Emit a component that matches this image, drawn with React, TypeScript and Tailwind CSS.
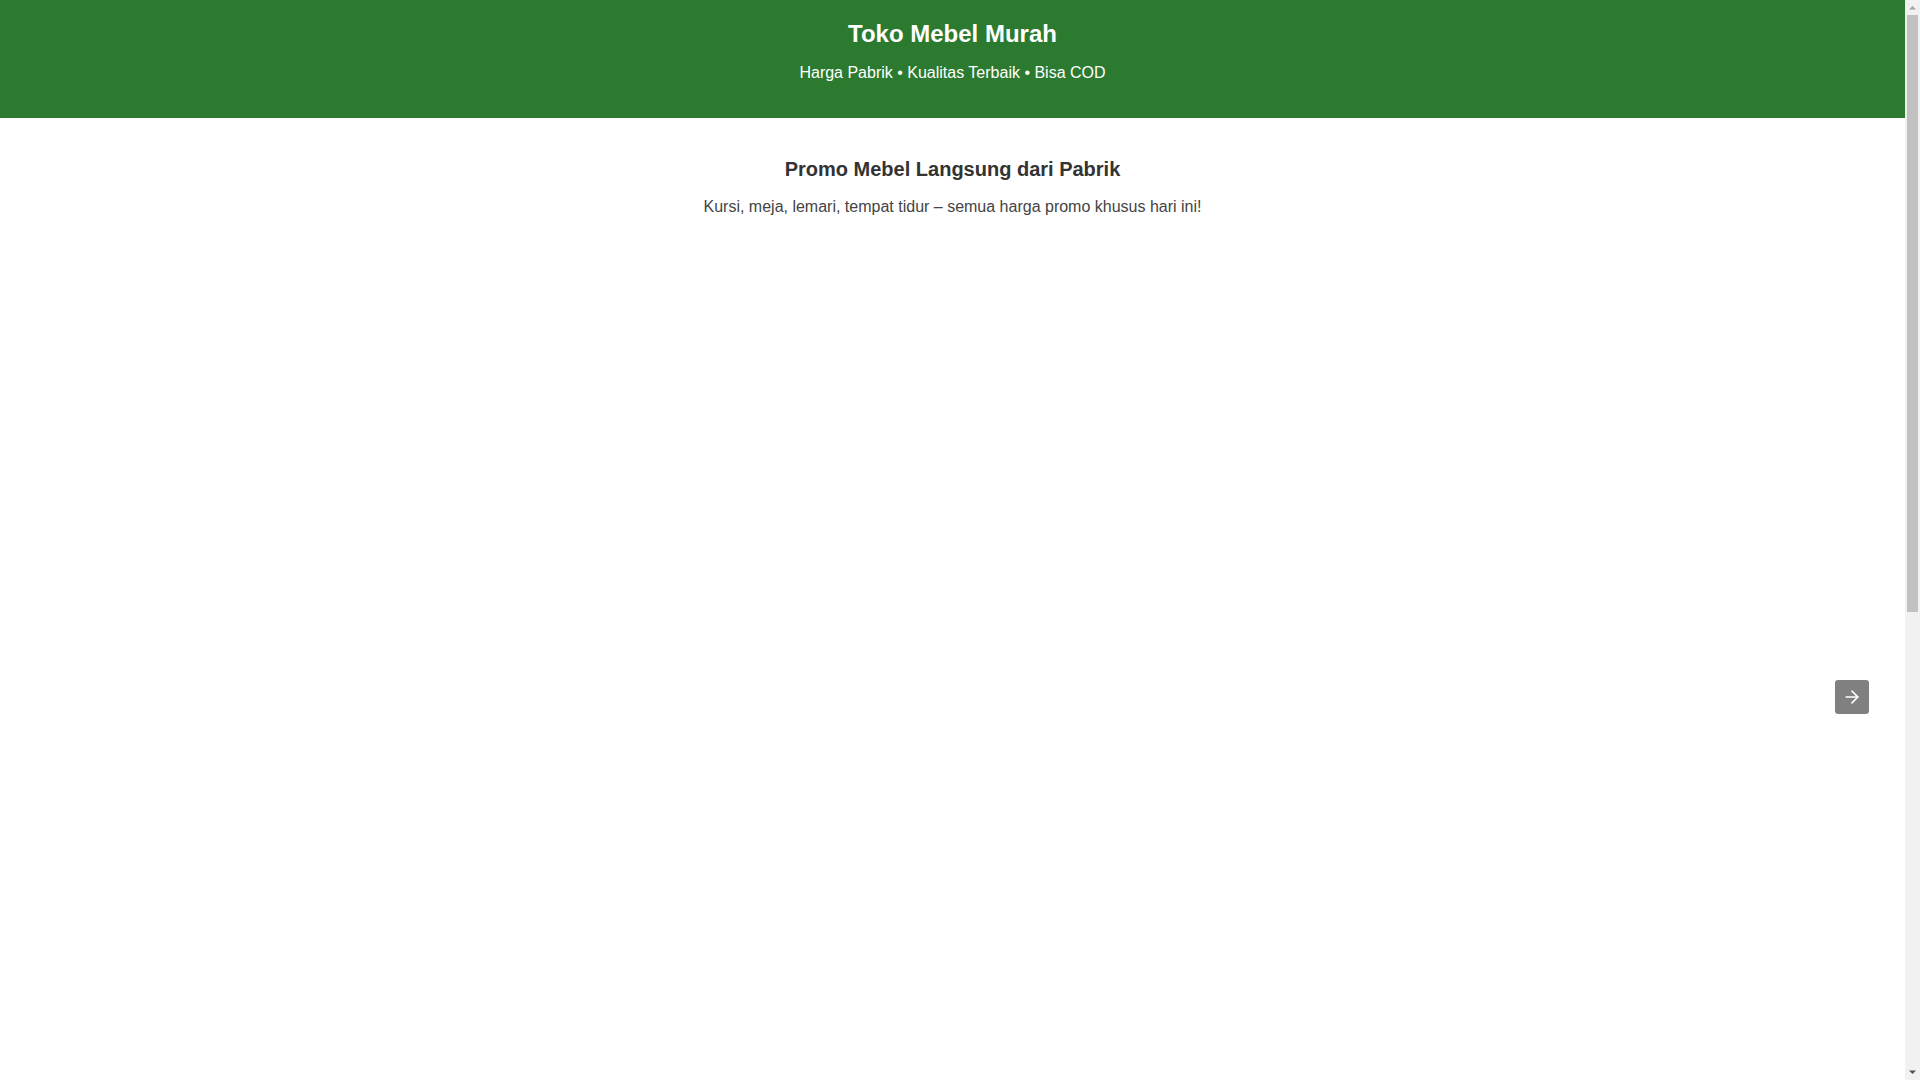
import React from 'react';
import { ArrowRight } from 'lucide-react';

const PromoSlider: React.FC = () => (
  <div className="relative h-[926px] w-full">
    <button
      type="button"
      aria-label="Next"
      className="absolute right-9 top-[461px] flex h-[34px] w-[34px] items-center justify-center rounded-[3px] bg-[#808080] text-white"
    >
      <ArrowRight size={20} strokeWidth={2} />
    </button>
  </div>
);

// page scrollbar, drawn as it shows on the screenshot
const ScrollBar: React.FC = () => (
  <div className="flex h-screen w-[15px] shrink-0 flex-col items-center bg-[#f1f1f1]">
    <svg width="15" height="15" viewBox="0 0 15 15" className="shrink-0">
      <path d="M4 9.5 L7.5 6 L11 9.5 Z" fill="#a3a3a3" />
    </svg>
    <div className="h-[597px] w-[11px] shrink-0 bg-[#c1c1c1]" />
    <div className="flex-1" />
    <svg width="15" height="15" viewBox="0 0 15 15" className="shrink-0">
      <path d="M4 5.5 L7.5 9 L11 5.5 Z" fill="#505050" />
    </svg>
  </div>
);

export default function App() {
  return (
    <div className="flex h-screen overflow-hidden bg-white font-['Liberation_Sans',Arial,sans-serif] text-[#333]">
      <main className="min-w-0 flex-1">
        <header className="bg-[#2b7a30] px-4 pt-5 pb-[33px] text-center text-white">
          <h1 className="text-2xl font-bold leading-7">Toko Mebel Murah</h1>
          <p className="mt-[13px] text-base leading-6">Harga Pabrik • Kualitas Terbaik • Bisa COD</p>
        </header>

        <section className="pt-[39px] text-center">
          <h2 className="text-xl font-bold leading-6 text-[#333]">Promo Mebel Langsung dari Pabrik</h2>
          <p className="mt-[14px] text-base leading-6 text-[#444]">
            Kursi, meja, lemari, tempat tidur – semua harga promo khusus hari ini!
          </p>
        </section>

        <PromoSlider />
      </main>
      <ScrollBar />
    </div>
  );
}
